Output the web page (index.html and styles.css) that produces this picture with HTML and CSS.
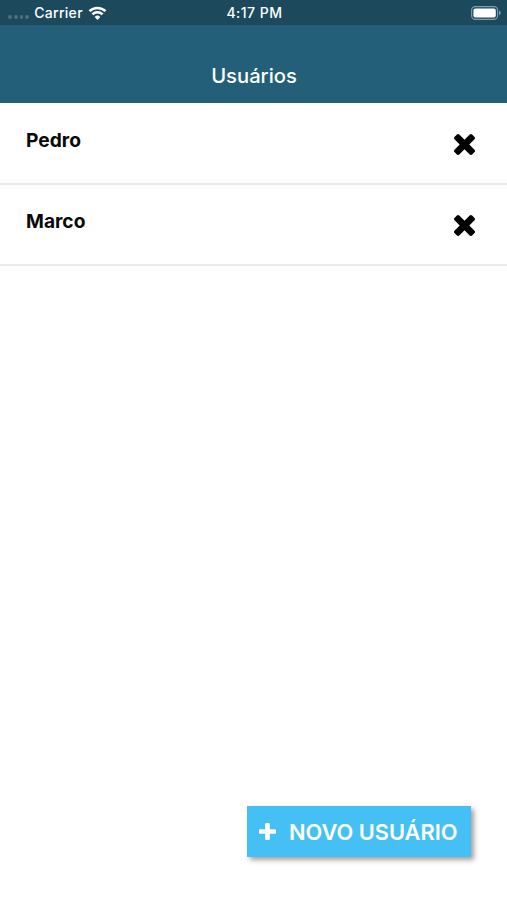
FILE: index.html
```
<!DOCTYPE html>
<html lang="pt-BR">
<head>
    <meta charset="UTF-8">
    <meta name="viewport" content="width=device-width, initial-scale=1.0">
    <title>Usuários</title>
    <link rel="stylesheet" href="styles.css">
</head>
<body>

<!-- Status bar -->
<div class="status-bar">
    <div class="carrier">
        <span class="signal"><i></i><i></i><i></i><i></i></span>
        <span class="carrier-name">Carrier</span>
        <svg class="wifi" viewBox="0 0 18 14" fill="none" stroke="#fff" stroke-width="2.5">
            <path d="M1 5.2a11.3 11.3 0 0 1 16 0"/>
            <path d="M3.9 8.3a7.2 7.2 0 0 1 10.2 0"/>
            <path d="M9 13.9L6.2 10.9a4 4 0 0 1 5.6 0z" fill="#fff" stroke="none"/>
        </svg>
    </div>
    <div class="time">4:17 PM</div>
    <div class="status-right">
        <svg class="battery" viewBox="0 0 30 14">
            <rect x="0.6" y="0.6" width="26" height="12.8" rx="3.6" fill="none" stroke="#7f9eab" stroke-width="1.1"/>
            <rect x="2.4" y="2.4" width="22.4" height="9.2" rx="2" fill="#fff"/>
            <path d="M28 4.8q1.8 0.6 1.8 2.2t-1.8 2.2z" fill="#7f9eab"/>
        </svg>
    </div>
</div>

<header class="header">
    <h1>Usuários</h1>
</header>

<!-- Users -->
<ul class="user-list">
    <li class="user">
        <span class="user-name">Pedro</span>
        <button class="remove" aria-label="Remover Pedro">
            <svg viewBox="302 366 1188 1188"><path d="M1490 1322q0 40-28 68l-136 136q-28 28-68 28t-68-28l-294-294-294 294q-28 28-68 28t-68-28l-136-136q-28-28-28-68t28-68l294-294-294-294q-28-28-28-68t28-68l136-136q28-28 68-28t68 28l294 294 294-294q28-28 68-28t68 28l136 136q28 28 28 68t-28 68l-294 294 294 294q28 28 28 68z"/></svg>
        </button>
    </li>
    <li class="user">
        <span class="user-name">Marco</span>
        <button class="remove" aria-label="Remover Marco">
            <svg viewBox="302 366 1188 1188"><path d="M1490 1322q0 40-28 68l-136 136q-28 28-68 28t-68-28l-294-294-294 294q-28 28-68 28t-68-28l-136-136q-28-28-28-68t28-68l294-294-294-294q-28-28-28-68t28-68l136-136q28-28 68-28t68 28l294 294 294-294q28-28 68-28t68 28l136 136q28 28 28 68t-28 68l-294 294 294 294q28 28 28 68z"/></svg>
        </button>
    </li>
</ul>

<button class="new-user">
    <svg viewBox="192 128 1408 1408" fill="#fff"><path d="M1600 736v192q0 40-28 68t-68 28h-416v416q0 40-28 68t-68 28h-192q-40 0-68-28t-28-68v-416h-416q-40 0-68-28t-28-68v-192q0-40 28-68t68-28h416v-416q0-40 28-68t68-28h192q40 0 68 28t28 68v416h416q40 0 68 28t28 68z"/></svg>
    <span>NOVO USUÁRIO</span>
</button>

</body>
</html>
```
FILE: styles.css
```
* {
    box-sizing: border-box;
}

body {
    margin: 0;
    height: 100vh;
    display: flex;
    flex-direction: column;
    background-color: #fff;
    font-family: Inter, 'Liberation Sans', sans-serif;
}

button {
    border: none;
    background: none;
    padding: 0;
    font-family: inherit;
    cursor: pointer;
}

/* Status bar */
.status-bar {
    height: 25px;
    flex: none;
    display: grid;
    grid-template-columns: 1fr auto 1fr;
    align-items: center;
    padding: 0 6px 0 8px;
    background-color: #1c495c;
    color: #fff;
    font-size: 14px;
    font-weight: 500;
    letter-spacing: 0.3px;
    line-height: 25px;
}

.time {
    letter-spacing: 0.5px;
}

.carrier {
    display: flex;
    align-items: center;
}

.signal {
    display: flex;
    gap: 2px;
    margin: 9px 5px 0 0;
}

.signal i {
    width: 3.8px;
    height: 3.8px;
    border-radius: 50%;
    background-color: #4c6f7e;
}

.wifi {
    width: 19px;
    height: 14px;
    margin-left: 5px;
}

.status-right {
    display: flex;
    justify-content: flex-end;
}

.battery {
    width: 30px;
    height: 14px;
}

/* Header */
.header {
    height: 78px;
    flex: none;
    padding: 38px 0 0 1px;
    background-color: #235f79;
    text-align: center;
}

.header h1 {
    margin: 0;
    color: #fff;
    font-size: 20.2px;
    font-weight: 500;
    line-height: 26px;
}

/* User list */
.user-list {
    margin: 0;
    padding: 1px 0 0;
    list-style: none;
    flex: 1;
}

.user {
    height: 81px;
    display: flex;
    justify-content: space-between;
    align-items: flex-start;
    padding: 25px 32px 0 26px;
    border-bottom: 2px solid #ebebeb;
}

.user-name {
    color: #0a0a0a;
    font-size: 19.2px;
    font-weight: 700;
    line-height: 22px;
}

.remove {
    margin-top: 5px;
    height: 21px;
}

.remove svg {
    display: block;
    width: 21px;
    height: 21px;
}

/* New user button */
.new-user {
    width: 224px;
    height: 51px;
    flex: none;
    align-self: flex-end;
    display: flex;
    align-items: center;
    gap: 13px;
    margin: 0 36px 43px 0;
    padding-left: 12px;
    background-color: #45c0f5;
    box-shadow: 3px 3px 5px rgba(60, 40, 40, 0.45);
    color: #fff;
    font-size: 21.8px;
    font-weight: 600;
    white-space: nowrap;
}

.new-user svg {
    width: 17px;
    height: 17px;
    flex: none;
}
```
